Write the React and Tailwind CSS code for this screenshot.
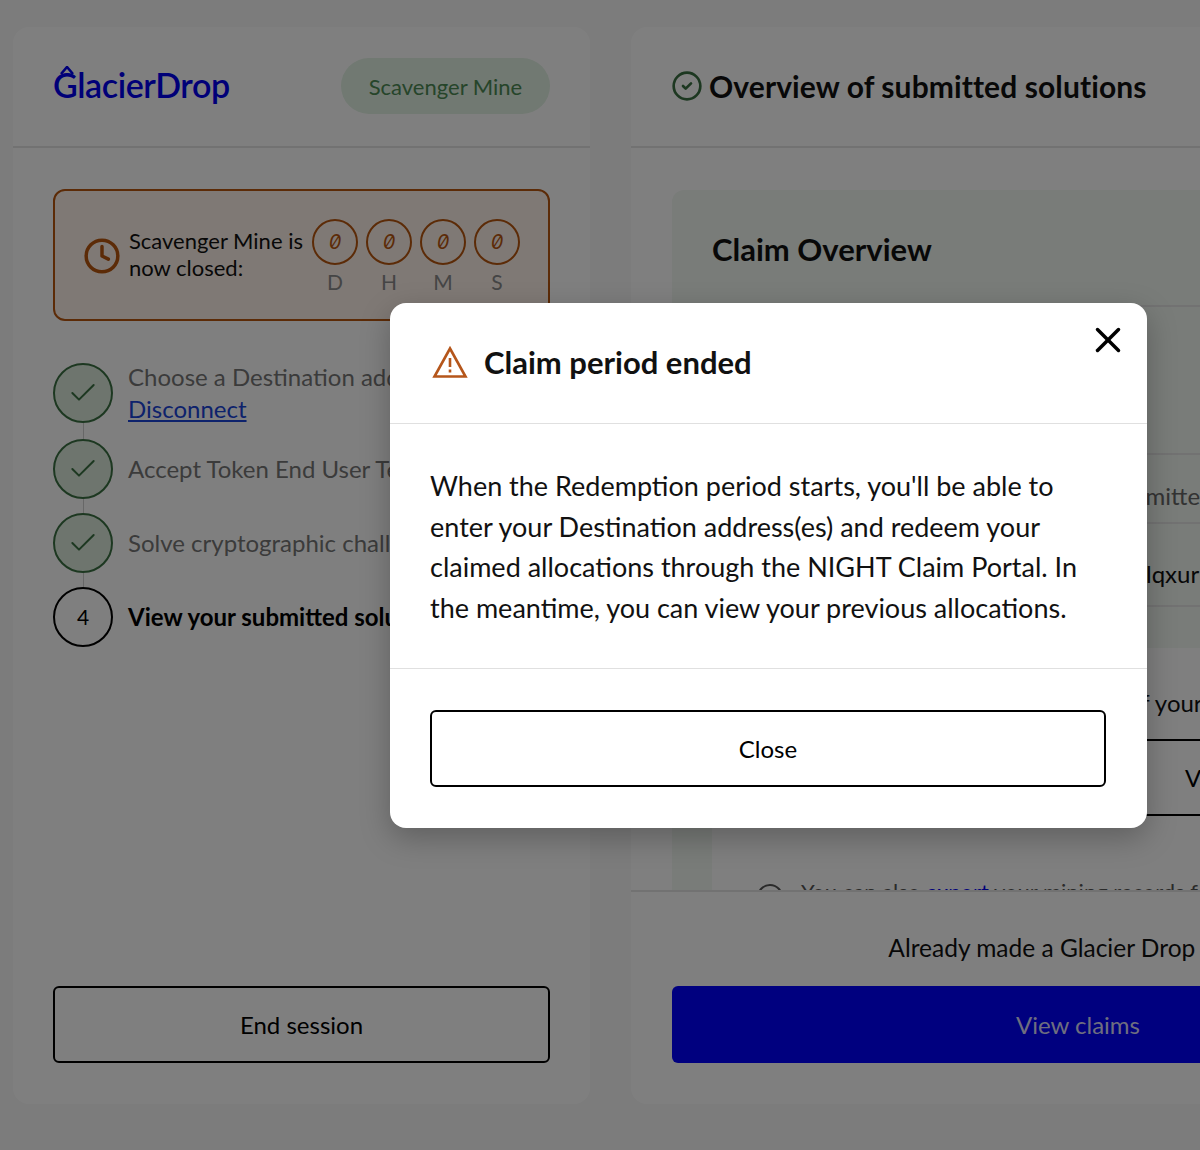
import React from 'react';
import { Check, CircleCheck, Clock, X } from 'lucide-react';

const font = { fontFamily: 'Lato, "Noto Sans", sans-serif' };

const Countdown = () => (
  <div className="flex gap-2">
    {['D', 'H', 'M', 'S'].map((label) => (
      <div key={label} className="flex w-[46px] flex-col items-center">
        <div className="flex h-[46px] w-[46px] items-center justify-center rounded-full border-2 border-[#b8560f] font-['Inter'] text-[20px] italic text-[#b8560f] slashed-zero">
          0
        </div>
        <span className="mt-[4px] text-[21px] leading-[26px] text-[#8a8a8a]">{label}</span>
      </div>
    ))}
  </div>
);

const StepCircle = ({ done, number }) => (
  <div
    className={`flex h-[60px] w-[60px] shrink-0 items-center justify-center rounded-full border-2 ${
      done ? 'border-[#3a7042] bg-[#dcebdd] text-[#3a7042]' : 'border-black text-black'
    }`}
  >
    {done ? <Check size={32} strokeWidth={1.5} /> : <span className="text-[21px]">{number}</span>}
  </div>
);

const Connector = ({ height }) => <div className={`ml-[30px] w-px bg-[#cfcfcf] ${height}`} />;

const LeftCard = () => (
  <section className="flex h-[1077px] w-[577px] shrink-0 flex-col rounded-2xl bg-white">
    <header className="flex h-[121px] items-center justify-between border-b-2 border-[#e4e4e4] px-10 pb-px">
      <div className="relative -mt-[2px] text-[34px] font-semibold leading-none tracking-[-0.4px] text-[#0000f0]">
        GlacierDrop
        <svg className="absolute left-[7px] top-[-2px]" width="14" height="9" viewBox="0 0 14 9">
          <path d="M1 8 7 1l6 7" fill="none" stroke="#0000f0" strokeWidth="2.6" />
        </svg>
      </div>
      <div className="flex h-14 w-[209px] items-center justify-center rounded-full bg-[#e2f2e4] text-[22px] text-[#4d8a55]">
        Scavenger Mine
      </div>
    </header>

    <div className="flex flex-1 flex-col px-10 pt-[41px]">
      <div className="flex h-[132px] items-start rounded-xl border-2 border-[#b8560f] bg-[#fff3ea] pl-[28px] pt-[28px]">
        <Clock className="mt-[18px] shrink-0 text-[#b8560f]" size={38} strokeWidth={2.2} />
        <p className="ml-[8px] mt-[8px] w-[183px] text-[22px] leading-[27px] text-[#111]">
          Scavenger Mine is now closed:
        </p>
        <Countdown />
      </div>

      <div className="mt-[42px]">
        <div className="flex h-[60px] items-center gap-[15px]">
          <StepCircle done />
          <div className="-mt-px text-[24px] leading-[32px] text-[#777] whitespace-nowrap">
            <p>Choose a Destination address</p>
            <a className="text-[#1a44d8] underline">Disconnect</a>
          </div>
        </div>
        <Connector height="h-4" />
        <div className="flex items-center gap-[15px]">
          <StepCircle done />
          <p className="text-[24px] text-[#777] whitespace-nowrap">Accept Token End User Terms</p>
        </div>
        <Connector height="h-[14px]" />
        <div className="flex items-center gap-[15px]">
          <StepCircle done />
          <p className="text-[24px] text-[#777] whitespace-nowrap">Solve cryptographic challenges</p>
        </div>
        <Connector height="h-[14px]" />
        <div className="flex items-center gap-[15px]">
          <StepCircle number={4} />
          <p className="text-[24px] font-bold text-black whitespace-nowrap">View your submitted solutions</p>
        </div>
      </div>
    </div>

    <div className="px-10 pb-[41px]">
      <button className="h-[77px] w-full rounded-md border-2 border-black text-[24px] text-black">End session</button>
    </div>
  </section>
);

const RightCard = () => (
  <section className="flex h-[1077px] w-[894px] shrink-0 flex-col rounded-2xl bg-white">
    <header className="flex h-[121px] items-center gap-[6px] border-b-2 border-[#e4e4e4] px-[40px] pb-px">
      <CircleCheck className="text-[#3a7042]" size={32} strokeWidth={2} />
      <h1 className="text-[30px] font-bold tracking-[0.1px] text-[#111]">Overview of submitted solutions</h1>
    </header>

    <div className="h-[742px] overflow-hidden px-[41px] pt-[42px]">
      <div className="rounded-xl bg-[#f2f8f2]">
        <div className="flex h-[117px] items-center border-b-2 border-[#e4e4e4] px-10 pt-[3px]">
          <h2 className="text-[31px] font-bold text-[#111]">Claim Overview</h2>
        </div>
        <div className="h-[146px]" />
        <div className="flex h-[71px] items-center border-y-2 border-[#e4e4e4] pl-[434px] pt-[14px] text-[24px] text-[#666]">
          Submitted
        </div>
        <div className="flex h-[83px] items-center border-b-2 border-[#e4e4e4] pl-[474px] pt-[18px] text-[24px] text-[#111]">
          lqxurm
        </div>
        <div className="h-[41px]" />
        <div className="ml-[40px] bg-white">
          <p className="pl-[342px] pt-[37px] text-[24px] text-[#111] whitespace-nowrap">a copy of your</p>
          <button className="mt-[18px] h-[77px] w-full border-y-2 border-black pl-[473px] text-left text-[24px] text-black">
            View
          </button>
          <div className="mt-[68px] flex gap-[18px] pl-[45px] text-[22px] text-[#555]">
            <span className="h-[26px] w-[26px] shrink-0 rounded-full border-2 border-[#555]" />
            <p className="-mt-[3px] leading-[22px] whitespace-nowrap">
              You can also <a className="text-[#0000f0]">export</a> your mining records for
            </p>
          </div>
        </div>
      </div>
    </div>

    <footer className="flex flex-1 flex-col items-center border-t-2 border-[#e4e4e4] px-[41px] pb-[41px] pt-[40px]">
      <p className="text-[24.5px] leading-[32px] text-[#111]">Already made a Glacier Drop claim?</p>
      <button className="mt-auto h-[77px] w-full rounded-md bg-[#0000ff] text-[24px] text-[#dcdcff]">View claims</button>
    </footer>
  </section>
);

const Modal = () => (
  <div className="absolute left-[390px] top-[303px] w-[757px] rounded-2xl bg-white shadow-[0_10px_30px_rgba(0,0,0,0.25)]">
    <div className="relative flex h-[121px] items-center gap-[15px] border-b border-[#e0e0e0] pl-[41px] pr-[41px] pb-[2px]">
      <svg className="shrink-0" width="38" height="34" viewBox="0 0 38 34" fill="none" stroke="#b5561b" strokeWidth="2.6">
        <path d="M19 3.5 34.5 31.5H3.5Z" strokeLinejoin="miter" />
        <path d="M19 13V22" />
        <path d="M19 24.5V27.5" />
      </svg>
      <h2 className="text-[31px] font-bold text-[#111]">Claim period ended</h2>
      <X className="absolute right-[18px] top-[16px] text-black" size={42} strokeWidth={2} />
    </div>
    <div className="h-[245px] border-b border-[#e0e0e0] pl-[40px] pr-[41px] pt-[42px]">
      <p className="text-[27px] leading-[40.7px] text-[#111]">
        When the Redemption period starts, you'll be able to enter your Destination address(es) and redeem your claimed
        allocations through the NIGHT Claim Portal. In the meantime, you can view your previous allocations.
      </p>
    </div>
    <div className="pb-[41px] pl-[40px] pr-[41px] pt-[41px]">
      <button className="h-[77px] w-full rounded-md border-2 border-black text-[24px] text-black">Close</button>
    </div>
  </div>
);

export default function App() {
  return (
    <div className="relative h-[1150px] w-full overflow-hidden bg-[#f8f8f8]" style={font}>
      <div className="flex gap-[41px] pl-[13px] pt-[27px]">
        <LeftCard />
        <RightCard />
      </div>
      <div className="absolute inset-0 bg-black/50" />
      <Modal />
    </div>
  );
}
